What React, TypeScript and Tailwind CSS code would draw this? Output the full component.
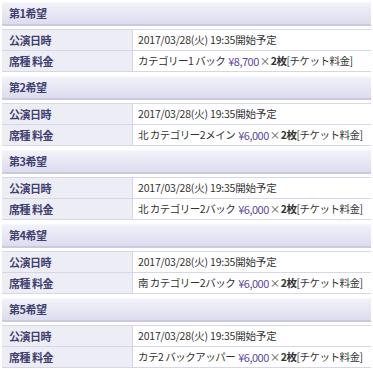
const choices = [
  { no: 1, seat: "カテゴリー1 バック", price: "¥8,700" },
  { no: 2, seat: "北 カテゴリー2メイン", price: "¥6,000" },
  { no: 3, seat: "北 カテゴリー2バック", price: "¥6,000" },
  { no: 4, seat: "南 カテゴリー2バック", price: "¥6,000" },
  { no: 5, seat: "カテ2 バックアッパー", price: "¥6,000" },
]

const font = "font-['MS_PGothic','Noto_Sans_CJK_JP',sans-serif]"

function ChoiceBlock({ no, seat, price }: { no: number; seat: string; price: string }) {
  return (
    <div className="pt-[2px] pb-[2px]">
      {/* Header */}
      <div className="h-[24px] flex items-center px-[7px] bg-gradient-to-b from-[#f2f2fa] to-[#dcdcef] border-t border-[#f8f8fc] border-b-2 border-b-[#c9c9e2]">
        <span className="text-[11px] font-bold text-[#3f3f70] tracking-[-0.5px]">第{no}希望</span>
      </div>
      {/* Table */}
      <div className="mt-[3px] border-t border-[#d6d6e6]">
        <div className="flex h-[21px] border-b border-[#d6d6e6]">
          <div className="w-[131px] shrink-0 bg-[#ededf6] flex items-center px-[7px] border-r border-[#d6d6e6]">
            <span className="text-[11px] font-bold text-[#3f3f70] tracking-[-0.5px]">公演日時</span>
          </div>
          <div className="flex-1 bg-white flex items-center px-[5px] text-[10.5px] text-[#333] tracking-[-0.2px]">
            2017/03/28(火) 19:35開始予定
          </div>
        </div>
        <div className="flex h-[21px] border-b border-[#d6d6e6]">
          <div className="w-[131px] shrink-0 bg-[#ededf6] flex items-center px-[7px] border-r border-[#d6d6e6]">
            <span className="text-[11px] font-bold text-[#3f3f70] tracking-[-0.5px]">席種 料金</span>
          </div>
          <div className="flex-1 bg-white flex items-center px-[5px] text-[10.5px] text-[#333] tracking-[-0.5px] whitespace-nowrap">
            {seat}
            <span className="text-[#5c48a0] text-[11px] ml-[3px]">{price}</span>
            <span className="text-[#555] ml-[1px]">×</span>
            <span className="font-bold ml-[1px]">2枚</span>
            <span>[チケット料金]</span>
          </div>
        </div>
      </div>
    </div>
  )
}

export default function App() {
  return (
    <div className={`w-[373px] h-[369px] bg-white overflow-hidden px-[2px] ${font}`}>
      {choices.map((c) => (
        <ChoiceBlock key={c.no} {...c} />
      ))}
    </div>
  )
}
